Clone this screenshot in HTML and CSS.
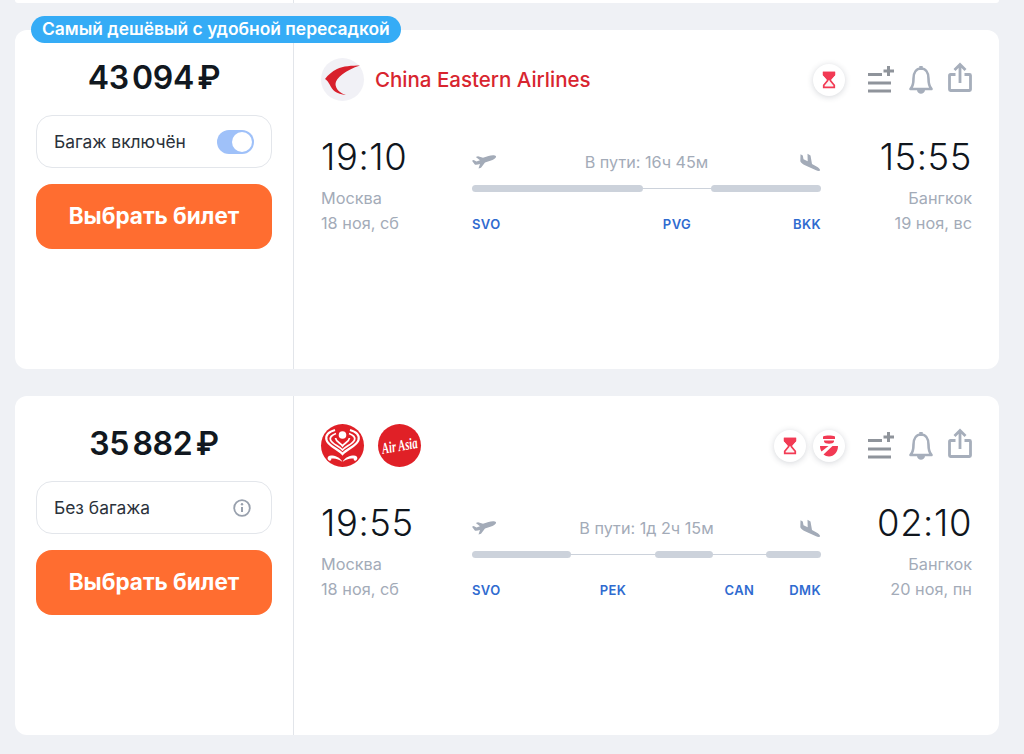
FILE: index.html
```html
<!DOCTYPE html>
<html lang="ru">
<head>
<meta charset="utf-8">
<title>Билеты</title>
<link rel="stylesheet" href="styles.css">
</head>
<body>
<main class="list">
  <div class="card-tail"><div class="tail-left"></div></div>

  <article class="card">
    <div class="badge">Самый дешёвый с удобной пересадкой</div>
    <section class="buy">
      <div class="price">43 094 ₽</div>
      <div class="baggage">
        <span>Багаж включён</span>
        <span class="toggle"><span class="knob"></span></span>
      </div>
      <button class="select">Выбрать билет</button>
    </section>
    <section class="info">
      <header class="top">
        <div class="carriers">
          <svg class="logo" viewBox="0 0 43 43"><circle cx="21.5" cy="21.5" r="21.5" fill="#f1f1f6"/><path d="M39 7.500C31 7.500 22 8 16 11C11 13.500 7 17 4 21C7 22.500 9 27.500 11 30.500C14 34.500 19 36.500 25 37C19 35 14.500 31 14.500 26C14.500 20 25 12 39 7.500Z" fill="#d8202c"/></svg>
          <span class="airline">China Eastern Airlines</span>
        </div>
        <div class="actions">
          <span class="chip"><svg viewBox="0 0 16 20"><path d="M2 1.500H14V4L9.500 9.500V10.500L14 16V18.500H2V16L6.500 10.500V9.500L2 4Z" fill="#fdf3f4" stroke="#f23a54" stroke-width="2"/><path d="M1 .5H15V4.500L9 10H7L1 4.500Z" fill="#f23a54"/></svg></span>
          <span class="tools">
            <svg class="tool tool-list" viewBox="0 0 26 30"><path d="M0 9.500H14M0 18H23M0 26H23" stroke="#8f949b" stroke-width="3" fill="none"/><path d="M20.500 1V11M15.500 6H26" stroke="#8f949b" stroke-width="3" fill="none"/></svg>
            <svg class="tool" viewBox="0 0 24 30"><path d="M1.500 24C4 21.500 4.500 18.500 4.500 13.500C4.500 7.500 7.500 3.500 12 3.500C16.500 3.500 19.500 7.500 19.500 13.500C19.500 18.500 20 21.500 22.500 24Z" fill="none" stroke="#a6aebb" stroke-width="2.600" stroke-linejoin="round"/><path d="M10.300 1H13.700V5H10.300ZM8 25H16C15.500 30 8.500 30 8 25Z" fill="#a6aebb"/></svg>
            <svg class="tool" viewBox="0 0 24 30"><path d="M7.500 9.500H2.500C1.800 9.500 1.500 9.800 1.500 10.500V24.500C1.500 25.200 1.800 25.500 2.500 25.500H21.500C22.200 25.500 22.500 25.200 22.500 24.500V10.500C22.500 9.800 22.200 9.500 21.500 9.500H16.500" fill="none" stroke="#a6aebb" stroke-width="2.800"/><path d="M12 18V0M6.500 5L12 -.5L17.500 5" fill="none" stroke="#a6aebb" stroke-width="2.800"/></svg>
          </span>
        </div>
      </header>
      <div class="flight">
        <div class="end">
          <div class="time">19:10</div>
          <div class="place">Москва</div>
          <div class="place">18 ноя, сб</div>
        </div>
        <div class="route">
          <div class="route-head">
            <svg class="plane" viewBox="0 0 24 18"><path d="M24 3.200C23 1.800 19.500 2 16.500 3L11 4.800L6 3.200L3.800 4L8 7.200L4.500 8.500L1.600 7L0 7.700L2.800 11.500C3.600 12 6 11.600 8 11L6.500 15.500L9 14.700L13 9.500L20.500 7C23 6 24.400 4.500 24 3.200Z"/></svg>
            <span>В пути: 16ч 45м</span>
            <svg class="plane" viewBox="0 0 24 18"><path d="M23 17.500C23.500 16 21.500 14.500 19.500 13.400L15 11L13.500 2.500L10.500 .8L10.700 8.300L6.500 6.200L5.800 2.500L3.500 1.200L3.300 8.300C4 10 6 11.300 8 12.200L18.500 17C20.500 18 22.600 18.300 23 17.500Z"/></svg>
          </div>
          <div class="legs legs-one">
            <span class="leg"></span><span class="stop"></span><span class="leg"></span>
            <span class="code">SVO</span><span class="code mid">PVG</span><span class="code last">BKK</span>
          </div>
        </div>
        <div class="end right">
          <div class="time">15:55</div>
          <div class="place">Бангкок</div>
          <div class="place">19 ноя, вс</div>
        </div>
      </div>
    </section>
  </article>

  <article class="card">
    <section class="buy">
      <div class="price">35 882 ₽</div>
      <div class="baggage">
        <span>Без багажа</span>
        <svg class="hint" viewBox="0 0 18 18"><circle cx="9" cy="9" r="7.800" fill="none" stroke="#98a0ad" stroke-width="1.800"/><path d="M9 8V13" stroke="#98a0ad" stroke-width="2"/><circle cx="9" cy="5.300" r="1.200" fill="#98a0ad"/></svg>
      </div>
      <button class="select">Выбрать билет</button>
    </section>
    <section class="info">
      <header class="top">
        <div class="carriers pair">
          <svg class="logo" viewBox="0 0 43 43"><circle cx="21.5" cy="21.5" r="21.5" fill="#e02027"/><g fill="none" stroke="#fff"><path d="M14 6C7 8 4.500 12 5.500 16C7 22 16 24 21.500 30C27 24 36 22 37.500 16C38.500 12 36 8 29 6" stroke-width="2.200"/><path d="M15 9.500C10.500 11 8.500 13.500 9.500 16C11 20 18 22 21.500 26C25 22 32 20 33.500 16C34.500 13.500 32.500 11 28 9.500" stroke-width="1.800"/><path d="M14.500 14C15 18 19.500 19 21.500 22C23.500 19 28 18 28.500 14" stroke-width="1.800"/></g><circle cx="21.500" cy="11" r="3.800" fill="#fff"/><path d="M21.500 38C19 33 14 31.500 10 31.500C6.500 31.500 5.500 35 8 36.500C9.500 37.200 11 36 10 34.800C13 33.800 18 35 21.500 38C25 35 30 33.800 33 34.800C32 36 33.500 37.200 35 36.500C37.500 35 36.500 31.500 33 31.500C29 31.500 24 33 21.500 38Z" fill="#fff"/></svg>
          <svg class="logo" viewBox="0 0 43 43"><circle cx="21.5" cy="21.5" r="21.5" fill="#e02027"/><text class="asia" x="21.500" y="27" text-anchor="middle" textLength="36" lengthAdjust="spacingAndGlyphs" transform="rotate(-10 21.500 21.500)">Air Asia</text></svg>
        </div>
        <div class="actions">
          <span class="chip"><svg viewBox="0 0 16 20"><path d="M2 1.500H14V4L9.500 9.500V10.500L14 16V18.500H2V16L6.500 10.500V9.500L2 4Z" fill="#fdf3f4" stroke="#f23a54" stroke-width="2"/><path d="M1 .5H15V4.500L9 10H7L1 4.500Z" fill="#f23a54"/></svg></span>
          <span class="chip"><svg class="seat" viewBox="0 0 18 22"><path d="M3 1.500C6 .3 12 .3 15 1.500V4H3ZM4 5.500H14V6.500C13.500 9.500 4.500 9.500 4 6.500Z" fill="#f23a54"/><path d="M0 11H8.500L1.500 16.500C.5 15 0 13 0 11ZM12.500 11H18C18 17 14 21.500 9 21.500C7 21.500 5 20.800 3.500 19.500Z" fill="#f23a54"/></svg></span>
          <span class="tools">
            <svg class="tool tool-list" viewBox="0 0 26 30"><path d="M0 9.500H14M0 18H23M0 26H23" stroke="#8f949b" stroke-width="3" fill="none"/><path d="M20.500 1V11M15.500 6H26" stroke="#8f949b" stroke-width="3" fill="none"/></svg>
            <svg class="tool" viewBox="0 0 24 30"><path d="M1.500 24C4 21.500 4.500 18.500 4.500 13.500C4.500 7.500 7.500 3.500 12 3.500C16.500 3.500 19.500 7.500 19.500 13.500C19.500 18.500 20 21.500 22.500 24Z" fill="none" stroke="#a6aebb" stroke-width="2.600" stroke-linejoin="round"/><path d="M10.300 1H13.700V5H10.300ZM8 25H16C15.500 30 8.500 30 8 25Z" fill="#a6aebb"/></svg>
            <svg class="tool" viewBox="0 0 24 30"><path d="M7.500 9.500H2.500C1.800 9.500 1.500 9.800 1.500 10.500V24.500C1.500 25.200 1.800 25.500 2.500 25.500H21.500C22.200 25.500 22.500 25.200 22.500 24.500V10.500C22.500 9.800 22.200 9.500 21.500 9.500H16.500" fill="none" stroke="#a6aebb" stroke-width="2.800"/><path d="M12 18V0M6.500 5L12 -.5L17.500 5" fill="none" stroke="#a6aebb" stroke-width="2.800"/></svg>
          </span>
        </div>
      </header>
      <div class="flight">
        <div class="end">
          <div class="time">19:55</div>
          <div class="place">Москва</div>
          <div class="place">18 ноя, сб</div>
        </div>
        <div class="route">
          <div class="route-head">
            <svg class="plane" viewBox="0 0 24 18"><path d="M24 3.200C23 1.800 19.500 2 16.500 3L11 4.800L6 3.200L3.800 4L8 7.200L4.500 8.500L1.600 7L0 7.700L2.800 11.500C3.600 12 6 11.600 8 11L6.500 15.500L9 14.700L13 9.500L20.500 7C23 6 24.400 4.500 24 3.200Z"/></svg>
            <span>В пути: 1д 2ч 15м</span>
            <svg class="plane" viewBox="0 0 24 18"><path d="M23 17.500C23.500 16 21.500 14.500 19.500 13.400L15 11L13.500 2.500L10.500 .8L10.700 8.300L6.500 6.200L5.800 2.500L3.500 1.200L3.300 8.300C4 10 6 11.300 8 12.200L18.500 17C20.500 18 22.600 18.300 23 17.500Z"/></svg>
          </div>
          <div class="legs legs-two">
            <span class="leg"></span><span class="stop"></span><span class="leg"></span><span class="stop"></span><span class="leg"></span>
            <span class="code">SVO</span><span class="code mid">PEK</span><span></span><span class="code mid">CAN</span><span class="code last">DMK</span>
          </div>
        </div>
        <div class="end right">
          <div class="time">02:10</div>
          <div class="place">Бангкок</div>
          <div class="place">20 ноя, пн</div>
        </div>
      </div>
    </section>
  </article>
</main>
</body>
</html>
```

FILE: styles.css
```css
* { box-sizing: border-box; }
html, body { margin: 0; height: 754px; overflow: hidden; }
body {
  background: #eff1f5;
  font-family: Inter, "Noto Sans", sans-serif;
  color: #111820;
}
.list {
  display: flex;
  flex-direction: column;
  gap: 27px;
  width: 984px;
  margin-left: 15px;
}
.card-tail {
  height: 3px;
  background: #fff;
  border-radius: 0 0 12px 12px;
}
.tail-left { width: 279px; height: 3px; border-right: 1px solid #e2e5ea; }
.card {
  position: relative;
  display: flex;
  height: 339px;
  background: #fff;
  border-radius: 12px;
}
.badge {
  position: absolute;
  left: 16px;
  top: -14px;
  height: 27px;
  padding: 0 11px;
  border-radius: 14px;
  background: #35acf6;
  color: #fff;
  font-size: 17.400px;
  font-weight: 600;
  line-height: 26px;
  white-space: nowrap;
}
.buy {
  width: 279px;
  flex: none;
  padding: 29px 21px 0;
  border-right: 1px solid #e2e5ea;
  display: flex;
  flex-direction: column;
}
.price {
  text-align: center;
  font-size: 32px;
  font-weight: 600;
  line-height: 38px;
  height: 38px;
  margin-bottom: 18px;
  letter-spacing: -.3px;
  word-spacing: -4.500px;
}
.baggage {
  height: 53px;
  display: flex;
  align-items: center;
  justify-content: space-between;
  padding: 0 17px;
  border: 1px solid #e3e6eb;
  border-radius: 16px;
  font-size: 17.400px;
  color: #2b323b;
}
.toggle {
  width: 37px;
  height: 24px;
  border-radius: 12px;
  background: #9fc1f9;
  display: flex;
  align-items: center;
  justify-content: flex-end;
  padding-right: 2px;
}
.knob { width: 20px; height: 20px; border-radius: 50%; background: #fff; }
.hint { width: 18px; height: 18px; margin-right: 3px; }
.select {
  height: 65px;
  margin-top: 16px;
  padding: 0 0 2px;
  border: 0;
  border-radius: 16px;
  background: #ff6d30;
  color: #fff;
  font: 700 22.500px Inter, "Noto Sans", sans-serif;
}
.info { flex: 1; padding: 28px 27px 0; }
.top {
  display: flex;
  align-items: center;
  justify-content: space-between;
  height: 43px;
}
.carriers { display: flex; align-items: center; gap: 11px; }
.pair { gap: 14px; }
.logo { width: 43px; height: 43px; display: block; overflow: visible; }
.airline { font-size: 20.500px; font-weight: 500; color: #d8252f; }
.asia {
  font-family: "Liberation Serif", serif;
  font-style: italic;
  font-weight: 700;
  font-size: 16px;
  fill: #fff;
}
.actions { display: flex; align-items: center; gap: 7px; }
.chip {
  width: 32px;
  height: 32px;
  border-radius: 50%;
  background: #fff;
  box-shadow: 0 1px 6px rgba(40, 50, 70, .2);
  display: flex;
  align-items: center;
  justify-content: center;
}
.chip svg { width: 14px; height: 18px; }
.chip .seat { width: 18px; height: 22px; }
.tools { display: flex; align-items: center; gap: 15px; margin-left: 16px; }
.tool { width: 24px; height: 30px; display: block; overflow: visible; }
.tool-list { width: 26px; }
.flight {
  display: grid;
  grid-template-columns: 151px 1fr 151px;
  margin-top: 34px;
}
.time { font-size: 36.400px; font-weight: 350; letter-spacing: .6px; line-height: 44px; height: 44px; margin-bottom: 7px; color: #10161d; }
.place { font-size: 16.300px; line-height: 25px; color: #a3abb8; }
.right { text-align: right; }
.route { padding-top: 14px; }
.route-head {
  display: flex;
  align-items: center;
  justify-content: space-between;
  height: 26px;
  font-size: 16.200px;
  color: #a3abb8;
}
.plane { width: 24px; height: 18px; fill: #a3abb8; display: block; }
.legs { display: grid; align-items: center; margin-top: 10px; row-gap: 24px; }
.legs-one { grid-template-columns: 171px 68px 110px; }
.legs-two { grid-template-columns: 99px 84px 58px 53px 55px; }
.leg { height: 7px; border-radius: 4px; background: #ccd2db; }
.stop { height: 1px; background: #ccd2db; }
.code { font-size: 13px; font-weight: 600; line-height: 16px; color: #2f6bd0; letter-spacing: .4px; }
.mid { text-align: center; }
.last { text-align: right; }
```
